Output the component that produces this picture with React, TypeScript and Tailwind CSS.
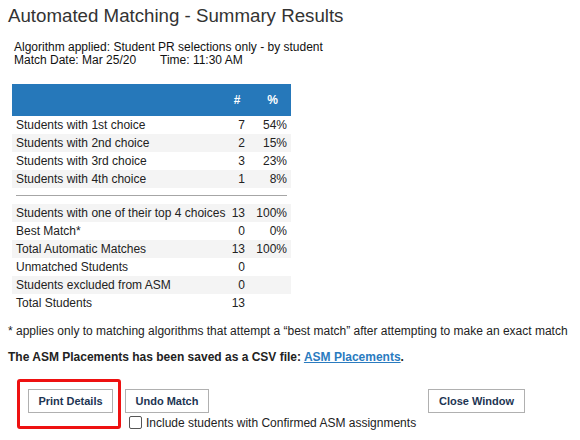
import React from "react";

const top = [
  ["Students with 1st choice", "7", "54%"],
  ["Students with 2nd choice", "2", "15%"],
  ["Students with 3rd choice", "3", "23%"],
  ["Students with 4th choice", "1", "8%"],
];
const bottom = [
  ["Students with one of their top 4 choices", "13", "100%"],
  ["Best Match*", "0", "0%"],
  ["Total Automatic Matches", "13", "100%"],
  ["Unmatched Students", "0", ""],
  ["Students excluded from ASM", "0", ""],
  ["Total Students", "13", ""],
];

function Row({ r, shaded }: { r: string[]; shaded: boolean }) {
  return (
    <div
      className={`grid grid-cols-[213px_24px_5px_37px] h-[18px] leading-[18px] ${
        shaded ? "bg-[#f4f4f4]" : "bg-white"
      }`}
    >
      <div className="pl-1 whitespace-nowrap">{r[0]}</div>
      <div className="text-right pr-1">{r[1]}</div>
      <div />
      <div className="text-right pr-1">{r[2]}</div>
    </div>
  );
}

export default function App() {
  return (
    <div className="relative w-[580px] h-[440px] bg-white text-[#222] text-[12px] font-['Liberation_Sans',Arial,sans-serif] overflow-hidden">
      <div className="pl-2 pt-[5px]">
        <h1 className="text-[18.7px] leading-[22px] text-[#333] font-normal">
          Automated Matching - Summary Results
        </h1>
        <div className="mt-[14px] ml-[6px] leading-[13px] text-[#111]">
          <div>Algorithm applied: Student PR selections only - by student</div>
          <div className="flex">
            <span className="w-[146px]">Match Date: Mar 25/20</span>
            <span>Time: 11:30 AM</span>
          </div>
        </div>
        <div className="mt-[17px] ml-1 w-[279px]">
          <div className="grid grid-cols-[213px_24px_5px_37px] h-[32px] items-center bg-[#2678ba] text-white font-bold">
            <div />
            <div className="text-center">#</div>
            <div />
            <div className="text-center">%</div>
          </div>
          {top.map((r, i) => (
            <Row key={i} r={r} shaded={i % 2 === 1} />
          ))}
          <div className="mt-[7px] mb-[8px] mx-1 h-px bg-[#a6a6a6]" />
          {bottom.map((r, i) => (
            <Row key={i} r={r} shaded={i % 2 === 0} />
          ))}
        </div>
        <div className="mt-3 leading-[14px]">
          * applies only to matching algorithms that attempt a “best match” after attempting to make an exact match
        </div>
        <div className="mt-3 leading-[14px] font-bold">
          The ASM Placements has been saved as a CSV file:{" "}
          <span className="text-[#2a7bbf] underline">ASM Placements</span>.
        </div>
        <div className="mt-[25px] flex items-start">
          <button className="ml-5 w-[85px] h-[24px] border border-[#b0b0b0] bg-white text-[#1d3553] font-bold text-[11px]">
            Print Details
          </button>
          <div className="ml-3 flex flex-col">
            <button className="w-[84px] h-[24px] border border-[#b0b0b0] bg-white text-[#1d3553] font-bold text-[11px]">
              Undo Match
            </button>
            <label className="mt-[3px] ml-[4px] flex items-center h-[13px] whitespace-nowrap">
              <span className="w-[13px] h-[13px] border border-[#555] rounded-[2px] bg-white" />
              <span className="ml-[4px] text-[#222]">Include students with Confirmed ASM assignments</span>
            </label>
          </div>
          <button className="ml-auto mr-[55px] w-[97px] h-[24px] border border-[#b0b0b0] bg-white text-[#1d3553] font-bold text-[11px]">
            Close Window
          </button>
        </div>
      </div>
      <div className="absolute left-[17px] top-[379px] w-[104px] h-[50px] border-[3px] border-[#ee1111] rounded-[3px] pointer-events-none" />
    </div>
  );
}
